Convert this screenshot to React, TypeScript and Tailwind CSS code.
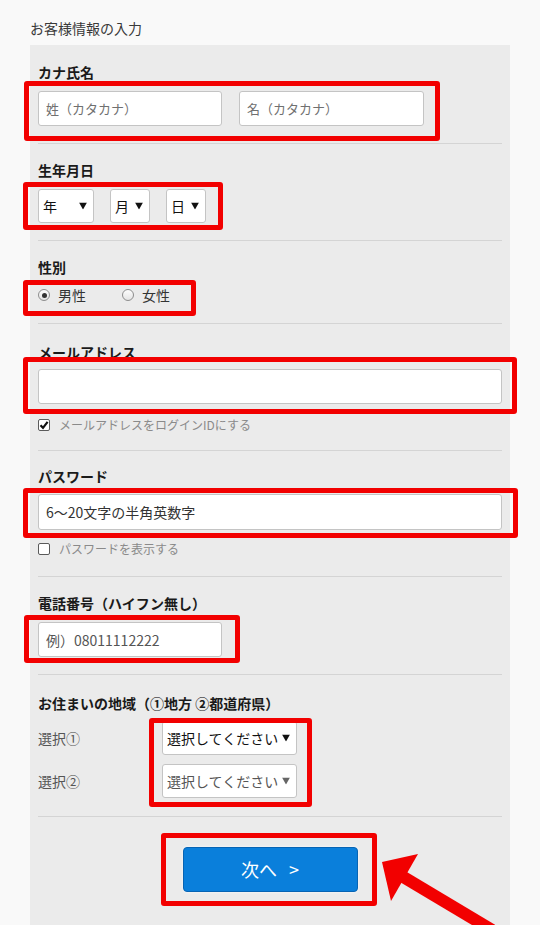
import type { ReactNode } from "react";

// red annotation frame laid over a group of fields
function Marked({
  box,
  className,
  children,
}: {
  box: string;
  className?: string;
  children: ReactNode;
}) {
  return (
    <div className={`relative ${className ?? ""}`}>
      {children}
      <div
        className={`pointer-events-none absolute rounded-[3px] border-[5px] border-[#f20000] ${box}`}
      />
    </div>
  );
}

function Section({
  label,
  className,
  children,
}: {
  label: ReactNode;
  className: string;
  children: ReactNode;
}) {
  return (
    <div className={`border-b border-[#d4d4d4] ${className}`}>
      <p className="text-[14px] font-bold leading-[18px] text-[#1a1a1a]">{label}</p>
      {children}
    </div>
  );
}

function Caret({ color = "#111" }: { color?: string }) {
  return (
    <svg
      viewBox="0 0 8 7"
      className="pointer-events-none absolute right-[7px] top-1/2 h-[7px] w-[8px] -translate-y-1/2"
    >
      <path d="M0 0h8L4 7z" fill={color} />
    </svg>
  );
}

function Select({
  text,
  className,
  dim,
}: {
  text: string;
  className: string;
  dim?: boolean;
}) {
  return (
    <div className={`relative ${className}`}>
      <select
        className={`h-full w-full appearance-none rounded-[3px] border border-[#c4c4c4] bg-white pl-[4px] text-[14px] outline-none ${
          dim ? "text-[#555]" : "text-[#111]"
        }`}
      >
        <option>{text}</option>
      </select>
      <Caret color={dim ? "#666" : "#111"} />
    </div>
  );
}

function Field({ placeholder, className }: { placeholder: string; className: string }) {
  return (
    <input
      placeholder={placeholder}
      className={`rounded-[3px] border border-[#c4c4c4] bg-white px-[7px] outline-none ${className}`}
    />
  );
}

function Radio({ checked, label }: { checked?: boolean; label: string }) {
  return (
    <label className="flex items-center gap-[8px] text-[14px] leading-[20px] text-[#333]">
      <span className="flex h-[12px] w-[12px] items-center justify-center rounded-full border border-[#8d8d8d] bg-gradient-to-b from-[#fdfdfd] to-[#e4e4e4]">
        {checked && <span className="h-[5px] w-[5px] rounded-full bg-[#333]" />}
      </span>
      {label}
    </label>
  );
}

function Check({ checked, label, className }: { checked?: boolean; label: string; className: string }) {
  return (
    <label className={`flex h-[20px] items-center gap-[9px] text-[12px] text-[#8a8a8a] ${className}`}>
      <span className="flex h-[12px] w-[12px] items-center justify-center rounded-[2px] border border-[#5a5a5a] bg-white">
        {checked && (
          <svg viewBox="0 0 10 10" className="h-[10px] w-[10px]">
            <path d="M1.5 5.2 4 7.8 8.6 1.8" fill="none" stroke="#111" strokeWidth="2.2" />
          </svg>
        )}
      </span>
      {label}
    </label>
  );
}

export default function App() {
  return (
    <div className="min-h-[925px] overflow-hidden bg-[#f9f9f9] font-['Noto_Sans_CJK_JP',sans-serif]">
      <p className="px-[30px] pb-[8px] pt-[19px] text-[14px] leading-[18px] text-[#3a3a3a]">
        お客様情報の入力
      </p>

      <div className="mx-[30px] bg-[#ebebeb] px-[8px]">
        <Section label="カナ氏名" className="pb-[17px] pt-[18px]">
          <Marked
            className="mt-[10px] flex w-fit gap-[17px]"
            box="-left-[14px] -top-[10px] -right-[16px] -bottom-[15px]"
          >
            <Field
              placeholder="姓（カタカナ）"
              className="h-[35px] w-[184px] text-[13px] placeholder:text-[#707070]"
            />
            <Field
              placeholder="名（カタカナ）"
              className="h-[35px] w-[185px] text-[13px] placeholder:text-[#707070]"
            />
          </Marked>
        </Section>

        <Section label="生年月日" className="pb-[17px] pt-[17px]">
          <Marked
            className="mt-[10px] flex w-fit gap-[16px]"
            box="-left-[15px] -top-[7px] -right-[17px] -bottom-[7px]"
          >
            <Select text="年" className="h-[34px] w-[56px]" />
            <Select text="月" className="h-[34px] w-[40px]" />
            <Select text="日" className="h-[34px] w-[40px]" />
          </Marked>
        </Section>

        <Section label="性別" className="pb-[18px] pt-[17px]">
          <Marked
            className="mt-[9px] flex h-[20px] w-[158px] gap-[36px]"
            box="-left-[15px] -top-[5px] -right-[0px] -bottom-[11px]"
          >
            <Radio checked label="男性" />
            <Radio label="女性" />
          </Marked>
        </Section>

        <Section label="メールアドレス" className="pb-[15px] pt-[19px]">
          <Marked className="mt-[8px]" box="-left-[15px] -top-[12px] -right-[15px] -bottom-[10px]">
            <Field placeholder="" className="block h-[35px] w-full text-[14px]" />
          </Marked>
          <Check checked label="メールアドレスをログインIDにする" className="mt-[11px]" />
        </Section>

        <Section label="パスワード" className="pb-[17px] pt-[16px]">
          <Marked className="mt-[9px]" box="-left-[15px] -top-[6px] -right-[16px] -bottom-[8px]">
            <Field
              placeholder="6～20文字の半角英数字"
              className="block h-[36px] w-full text-[14px] placeholder:text-[#333]"
            />
          </Marked>
          <Check label="パスワードを表示する" className="mt-[9px]" />
        </Section>

        <Section label="電話番号（ハイフン無し）" className="pb-[17px] pt-[17px]">
          <Marked className="mt-[10px] w-fit" box="-left-[14px] -top-[7px] -right-[18px] -bottom-[6px]">
            <Field
              placeholder="例）08011112222"
              className="block h-[35px] w-[184px] text-[14px] placeholder:text-[#555]"
            />
          </Marked>
        </Section>

        <Section label="お住まいの地域（①地方 ②都道府県）" className="pb-[18px] pt-[19px]">
          <div className="mt-[9px] flex">
            <div className="flex w-[124px] flex-col gap-[9px] text-[14px] text-[#555]">
              <span className="flex h-[34px] items-center">選択①</span>
              <span className="flex h-[34px] items-center">選択②</span>
            </div>
            <Marked
              className="flex w-fit flex-col gap-[9px]"
              box="-left-[13px] -top-[3px] -right-[15px] -bottom-[9px]"
            >
              <Select text="選択してください" className="h-[34px] w-[135px]" />
              <Select text="選択してください" className="h-[34px] w-[135px]" dim />
            </Marked>
          </div>
        </Section>

        <div className="relative flex justify-center pb-[40px] pt-[30px]">
          <Marked box="-left-[22px] -top-[14px] -right-[19px] -bottom-[14px]">
            <button
              type="button"
              className="flex h-[45px] w-[175px] items-center justify-center rounded-[4px] border border-[#0764b4] bg-[#0a7fdb] text-[18px] text-white shadow-[0_0_3px_rgba(255,255,255,0.9)]"
            >
              次へ<span className="ml-[12px]">&gt;</span>
            </button>
          </Marked>
          <svg
            viewBox="0 0 130 90"
            className="pointer-events-none absolute left-[332px] top-[27px] h-[90px] w-[130px]"
          >
            <path d="M12 18 48 10 21 57z" fill="#f20000" />
            <line x1="30" y1="31" x2="122" y2="86" stroke="#f20000" strokeWidth="12" />
          </svg>
        </div>
      </div>
    </div>
  );
}
